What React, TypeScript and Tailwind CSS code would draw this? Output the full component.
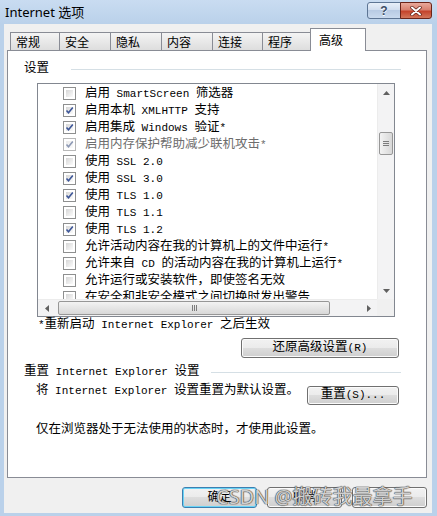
import React from "react";

type Row = { label: string; checked: boolean; disabled?: boolean };

const ROWS: Row[] = [
  { label: "启用 SmartScreen 筛选器", checked: false },
  { label: "启用本机 XMLHTTP 支持", checked: true },
  { label: "启用集成 Windows 验证*", checked: true },
  { label: "启用内存保护帮助减少联机攻击*", checked: true, disabled: true },
  { label: "使用 SSL 2.0", checked: false },
  { label: "使用 SSL 3.0", checked: true },
  { label: "使用 TLS 1.0", checked: true },
  { label: "使用 TLS 1.1", checked: false },
  { label: "使用 TLS 1.2", checked: true },
  { label: "允许活动内容在我的计算机上的文件中运行*", checked: false },
  { label: "允许来自 CD 的活动内容在我的计算机上运行*", checked: false },
  { label: "允许运行或安装软件，即使签名无效", checked: false },
  { label: "在安全和非安全模式之间切换时发出警告", checked: false },
];

const TABS = [
  { label: "常规", w: "w-[50px]" },
  { label: "安全", w: "w-[52px]" },
  { label: "隐私", w: "w-[52px]" },
  { label: "内容", w: "w-[52px]" },
  { label: "连接", w: "w-[51px]" },
  { label: "程序", w: "w-[50px]" },
];

// latin runs are set a bit smaller, like the half-width glyphs of the dialog font
function Mixed({ text }: { text: string }) {
  const parts = text.split(/([\x20-\x7e]+)/).filter((p) => p !== "");
  return (
    <>
      {parts.map((p, i) =>
        /^[\x20-\x7e]+$/.test(p) ? (
          <span key={i} className="text-[11px] whitespace-pre">
            {p}
          </span>
        ) : (
          <span key={i}>{p}</span>
        )
      )}
    </>
  );
}

function Checkbox({ checked, disabled }: { checked: boolean; disabled?: boolean }) {
  return (
    <span
      className={`relative block w-[13px] h-[13px] shrink-0 border bg-white p-[2px] ${
        disabled ? "border-[#b8b8b8]" : "border-[#8e8f8f]"
      }`}
    >
      <span
        className={`block w-full h-full bg-gradient-to-br ${
          disabled ? "from-[#ececec] to-[#fafafa]" : "from-[#d6d6d6] to-[#fbfbfb]"
        }`}
      />
      {checked && (
        <svg className="absolute left-0 top-0" width="11" height="11" viewBox="0 0 11 11">
          <path
            d="M2.5 5.5l2 2.3L8.8 2.6"
            fill="none"
            stroke={disabled ? "#8c98b4" : "#3d5698"}
            strokeWidth="1.6"
          />
        </svg>
      )}
    </span>
  );
}

function Arrow({ dir }: { dir: "up" | "down" | "left" | "right" }) {
  const d = {
    up: "M3.5 0L7 4H0z",
    down: "M0 0h7L3.5 4z",
    left: "M4 0v7L0 3.5z",
    right: "M0 0l4 3.5L0 7z",
  }[dir];
  const vertical = dir === "up" || dir === "down";
  return (
    <svg width={vertical ? 7 : 4} height={vertical ? 4 : 7} viewBox={vertical ? "0 0 7 4" : "0 0 4 7"}>
      <path d={d} fill="#606060" />
    </svg>
  );
}

function Button({ children, className = "", primary }: { children?: React.ReactNode; className?: string; primary?: boolean }) {
  return (
    <div
      className={`flex items-center justify-center rounded-[3px] border bg-[linear-gradient(#f2f2f2_0%,#ebebeb_50%,#dddddd_50%,#cfcfcf_100%)] text-black ${
        primary
          ? "border-[#3c7fb1] shadow-[inset_0_0_0_1px_#6ad4f6]"
          : "border-[#707070] shadow-[inset_0_0_0_1px_#fbfbfb]"
      } ${className}`}
    >
      {children}
    </div>
  );
}

export default function App() {
  return (
    <div className="relative w-[437px] h-[516px] overflow-hidden bg-[#bad1ea] flex flex-col font-['Liberation_Mono','Noto_Sans_CJK_SC',monospace] text-[12.5px] text-black">
      {/* title bar */}
      <div className="h-[24px] shrink-0 flex items-start bg-gradient-to-b from-[#c9dcf1] to-[#bad1ea]">
        <div className="pl-[5px] pt-[3px] text-[13px] leading-[18px] font-['Noto_Sans','Noto_Sans_CJK_SC',sans-serif]">
          Internet 选项
        </div>
        <div className="ml-auto mr-[5px] mt-[2px] flex">
          <div className="w-[34px] h-[17px] rounded-l-[3px] border border-[#5d7594] bg-[linear-gradient(#e7eff9_0%,#cfdcee_50%,#b8cbe4_50%,#c9daee_100%)] flex items-center justify-center text-[12px] font-bold leading-none text-[#3b4d66] font-['Liberation_Sans',sans-serif] [text-shadow:0_1px_0_#ffffff]">
            ?
          </div>
          <div className="w-[32px] h-[17px] -ml-px rounded-r-[3px] border border-[#6b2419] bg-[linear-gradient(#e9a99b_0%,#d88170_45%,#c4432b_55%,#d2765a_100%)] flex items-center justify-center">
            <svg width="14" height="10" viewBox="0 0 14 10">
              <path d="M3 1.5l8 7M11 1.5l-8 7" stroke="#5a1d14" strokeWidth="3.4" strokeLinecap="round" />
              <path d="M3 1.5l8 7M11 1.5l-8 7" stroke="#ffffff" strokeWidth="2" strokeLinecap="round" />
            </svg>
          </div>
        </div>
      </div>

      {/* dialog body */}
      <div className="flex-1 ml-[4px] mr-[5px] mb-[3px] bg-[#f0f0f0] flex flex-col">
        {/* tabs */}
        <div className="h-[23px] mt-[4px] pl-[6px] flex items-end text-[12px]">
          {TABS.map((t, i) => (
            <div
              key={t.label}
              className={`${t.w} ${i > 0 ? "-ml-px" : ""} h-[19px] border border-b-0 border-[#898c95] bg-gradient-to-b from-[#f4f4f4] to-[#dcdcdc] pl-[5px] leading-[17px] font-['Noto_Sans_CJK_SC',sans-serif]`}
            >
              {t.label}
            </div>
          ))}
          <div className="relative z-10 -ml-[2px] w-[56px] h-[23px] border border-b-0 border-[#898c95] bg-white pl-[8px] leading-[22px] font-['Noto_Sans_CJK_SC',sans-serif]">
            高级
          </div>
        </div>

        {/* tab page */}
        <div className="ml-[3px] -mt-px w-[420px] h-[428px] shrink-0 border border-[#898c95] bg-white pl-[16px] flex flex-col">
          <div className="mt-[10px] h-[16px] pr-[25px] flex items-center">
            <span className="leading-[16px]">设置</span>
            <span className="flex-1 ml-[22px] h-px bg-[#d5dfe5]" />
          </div>

          {/* settings list */}
          <div className="mt-[6px] ml-[13px] w-[358px] h-[234px] border border-[#828790] flex flex-col">
            <div className="flex-1 min-h-0 flex">
              <div className="flex-1 overflow-hidden pt-px">
                {ROWS.map((r) => (
                  <div key={r.label} className="h-[17px] pl-[25px] flex items-center whitespace-nowrap">
                    <Checkbox checked={r.checked} disabled={r.disabled} />
                    <span className={`ml-[9px] leading-[16px] ${r.disabled ? "text-[#6d6d6d]" : ""}`}>
                      <Mixed text={r.label} />
                    </span>
                  </div>
                ))}
              </div>
              <div className="w-[17px] bg-[#f3f3f4] border-l border-[#ececec] flex flex-col">
                <div className="h-[17px] flex items-center justify-center">
                  <Arrow dir="up" />
                </div>
                <div className="flex-1 px-px">
                  <div className="mt-[31px] h-[23px] rounded-[2px] border border-[#979797] bg-gradient-to-r from-[#f3f3f3] to-[#d8d8d8] flex flex-col items-center justify-center gap-[1px]">
                    <span className="w-[6px] h-px bg-[#7c7c7c]" />
                    <span className="w-[6px] h-px bg-[#7c7c7c]" />
                    <span className="w-[6px] h-px bg-[#7c7c7c]" />
                  </div>
                </div>
                <div className="h-[17px] flex items-center justify-center">
                  <Arrow dir="down" />
                </div>
              </div>
            </div>
            <div className="h-[17px] shrink-0 flex">
              <div className="flex-1 flex bg-[#f3f3f4] border-t border-[#ececec]">
                <div className="w-[17px] flex items-center justify-center">
                  <Arrow dir="left" />
                </div>
                <div className="flex-1 py-px">
                  <div className="ml-[3px] w-[272px] h-full rounded-[2px] border border-[#979797] bg-gradient-to-b from-[#f3f3f3] to-[#d8d8d8] flex items-center justify-center gap-[1px]">
                    <span className="w-px h-[6px] bg-[#7c7c7c]" />
                    <span className="w-px h-[6px] bg-[#7c7c7c]" />
                    <span className="w-px h-[6px] bg-[#7c7c7c]" />
                  </div>
                </div>
                <div className="w-[17px] flex items-center justify-center">
                  <Arrow dir="right" />
                </div>
              </div>
              <div className="w-[17px] bg-[#f0f0f0]" />
            </div>
          </div>

          <div className="ml-[14px] h-[16px] leading-[16px] whitespace-nowrap">
            <Mixed text="*重新启动 Internet Explorer 之后生效" />
          </div>

          <div className="mt-[5px] pr-[27px] flex justify-end">
            <Button className="w-[158px] h-[20px]">
              <Mixed text="还原高级设置(R)" />
            </Button>
          </div>

          <div className="mt-[6px] h-[16px] pr-[25px] flex items-center whitespace-nowrap">
            <span className="leading-[16px]">
              <Mixed text="重置 Internet Explorer 设置" />
            </span>
            <span className="flex-1 ml-[12px] h-px bg-[#d5dfe5]" />
          </div>

          <div className="mt-[3px] pl-[12px] pr-[27px] flex items-start">
            <span className="leading-[16px] whitespace-nowrap">
              <Mixed text="将 Internet Explorer 设置重置为默认设置。" />
            </span>
            <Button className="ml-auto mt-[3px] w-[92px] h-[19px]">
              <Mixed text="重置(S)..." />
            </Button>
          </div>

          <div className="mt-[17px] pl-[12px] leading-[16px] whitespace-nowrap">
            仅在浏览器处于无法使用的状态时，才使用此设置。
          </div>
        </div>

        {/* dialog buttons */}
        <div className="mt-[9px] pr-[5px] flex justify-end gap-[10px] text-[12px]">
          <Button primary className="w-[75px] h-[21px]">
            确定
          </Button>
          <Button className="w-[75px] h-[21px]">取消</Button>
          <Button className="w-[75px] h-[21px]" />
        </div>
      </div>

      {/* watermark */}
      <div className="absolute left-[216px] top-[486px] text-[20px] leading-[22px] whitespace-nowrap font-['Noto_Sans','Noto_Sans_CJK_SC',sans-serif] text-[rgba(255,255,255,0.75)] [text-shadow:0_0_1px_#404040,0_0_1px_#404040,0_0_1px_#404040]">
        CSDN @搬砖我最拿手
      </div>
    </div>
  );
}
